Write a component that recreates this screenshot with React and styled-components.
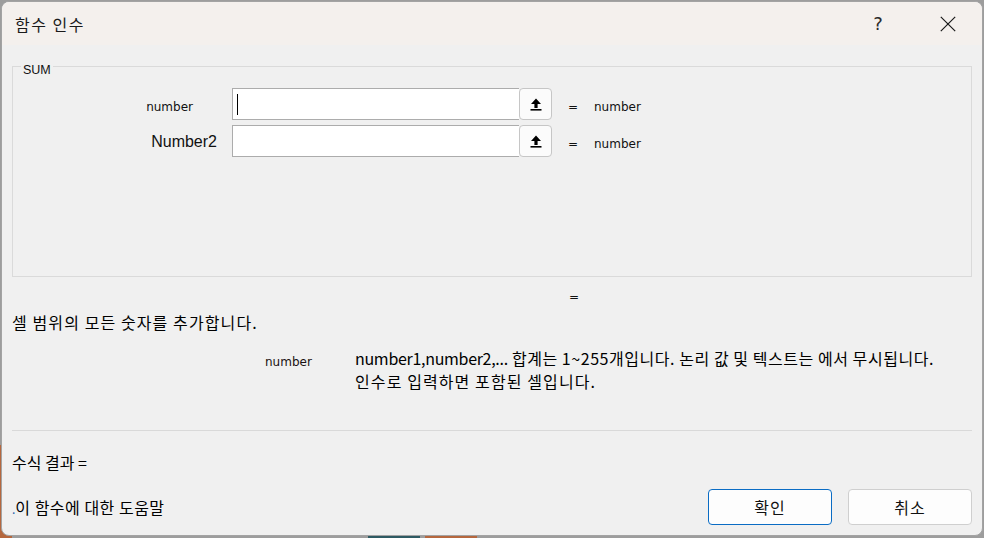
import React from "react";
import styled, { createGlobalStyle } from "styled-components";

const GlobalStyle = createGlobalStyle`
  html, body {
    margin: 0;
    padding: 0;
  }
  body {
    width: 984px;
    height: 538px;
    overflow: hidden;
    font-family: "Noto Sans CJK KR", "Noto Sans", sans-serif;
    color: #000;
  }
  * { box-sizing: border-box; }
`;

const Backdrop = styled.div`
  width: 984px;
  height: 538px;
  padding: 1px 1px 2px 1px;
  background:
    linear-gradient(#b5673e, #b5673e) 0 445px / 12px 93px no-repeat,
    linear-gradient(#2e5a63, #2e5a63) 368px 535px / 52px 3px no-repeat,
    linear-gradient(#b5673e, #b5673e) 425px 535px / 52px 3px no-repeat,
    #9d9d9d;
`;

const Dialog = styled.div`
  width: 982px;
  height: 535px;
  display: flex;
  flex-direction: column;
  border: 1px solid #a3a3a3;
  border-radius: 8px;
  overflow: hidden;
  background: #f0f0f0;
`;

const TitleBar = styled.div`
  height: 43px;
  flex: none;
  display: flex;
  align-items: center;
  background: #f4f0ed;
  padding: 0 11px 0 13px;
`;

const Title = styled.div`
  flex: 1;
  font-size: 16px;
  line-height: 20px;
  letter-spacing: 1.5px;
  color: #1a1a1a;
`;

const TitleButton = styled.div`
  width: 46px;
  height: 32px;
  display: flex;
  align-items: center;
  justify-content: center;
  margin-left: ${(p) => p.$gap || 0}px;
  font-family: "DejaVu Sans", sans-serif;
  font-size: 18px;
  color: #2b2b2b;
`;

const Body = styled.div`
  flex: 1;
  display: flex;
  flex-direction: column;
  padding: 0 10px;
`;

const GroupBox = styled.div`
  position: relative;
  margin-top: 21px;
  height: 211px;
  border: 1px solid #dadada;
  padding-top: 21px;
  display: flex;
  flex-direction: column;
  gap: 5px;
`;

const Legend = styled.div`
  position: absolute;
  top: -4px;
  left: 8px;
  padding: 0 2px;
  background: #f0f0f0;
  font-family: "Liberation Sans", sans-serif;
  font-size: 12.5px;
  line-height: 14px;
  color: #111;
`;

const ArgRow = styled.div`
  display: flex;
  align-items: center;
  height: 32px;
`;

const ArgLabel = styled.div`
  width: 219px;
  text-align: right;
  padding-right: ${(p) => p.$inset}px;
  padding-top: ${(p) => (p.$large ? 1 : 5)}px;
  font-family: ${(p) => (p.$large ? `"Liberation Sans"` : `"DejaVu Sans"`)}, sans-serif;
  font-size: ${(p) => (p.$large ? 16 : 12)}px;
  color: #111;
`;

const RefInput = styled.div`
  width: 320px;
  height: 32px;
  display: flex;
`;

const Field = styled.div`
  flex: 1;
  position: relative;
  display: flex;
  align-items: center;
  padding-left: 4px;
  background: #fff;
  border: 1px solid #acacac;
  border-right: none;
`;

const Caret = styled.span`
  width: 1px;
  height: 21px;
  background: #000;
`;

const RefButton = styled.div`
  width: 33px;
  height: 32px;
  display: flex;
  align-items: center;
  justify-content: center;
  background: #fbfbfb;
  border: 1px solid #c6c6c6;
  border-radius: 4px;
`;

const EqSign = styled.div`
  width: 26px;
  margin-left: ${(p) => p.$offset || 0}px;
  padding-top: ${(p) => p.$drop || 0}px;
  font-family: "DejaVu Sans", sans-serif;
  font-size: 12px;
  color: #111;
`;

const ArgValue = styled.div`
  padding-top: 5px;
  font-family: "DejaVu Sans", sans-serif;
  font-size: 12px;
  color: #111;
`;

const EqLine = styled.div`
  margin-top: 10px;
  height: 20px;
  line-height: 20px;
  display: flex;
`;

const Summary = styled.div`
  margin-top: 4px;
  font-size: 16px;
  line-height: 22px;
  letter-spacing: 1.1px;
`;

const DescBlock = styled.div`
  margin-top: 14px;
  display: flex;
  padding-left: 253px;
`;

const ArgName = styled.div`
  width: 90px;
  flex: none;
  padding-top: 4px;
  font-family: "DejaVu Sans", sans-serif;
  font-size: 12px;
  line-height: 23px;
  color: #1a1111;
`;

const DescText = styled.div`
  display: flex;
  flex-direction: column;
`;

const DescLine = styled.div`
  font-size: 16px;
  line-height: 23px;
  white-space: nowrap;
  letter-spacing: ${(p) => p.$spacing}px;
`;

/* argument list inside the description sits a little tighter */
const Latin = styled.span`
  letter-spacing: -0.3px;
`;

const Separator = styled.div`
  margin-top: 37px;
  height: 1px;
  background: #d9d9d9;
`;

const FormulaResult = styled.div`
  margin-top: 20px;
  font-size: 16px;
  line-height: 22px;
`;

const Footer = styled.div`
  margin-top: 16px;
  display: flex;
  align-items: center;
  gap: 16px;
`;

const HelpLink = styled.div`
  flex: 1;
  font-size: 16px;
  line-height: 22px;
  padding-top: 2px;
  letter-spacing: 0.5px;
`;

const LinkDot = styled.span`
  color: #1f5fa8;
  font-size: 12px;
  letter-spacing: 0;
`;

const DialogButton = styled.div`
  width: 124px;
  height: 36px;
  display: flex;
  align-items: center;
  justify-content: center;
  font-size: 16px;
  letter-spacing: 1px;
  background: #fdfdfd;
  border: 1px solid ${(p) => (p.$primary ? "#0a6cc4" : "#cfcfcf")};
  border-radius: 4px;
  color: #111;
`;

const RefArrow = () => (
  <svg width="12" height="13" viewBox="0 0 12 13">
    <path d="M6 0.5 L11 6 L7.6 6 L7.6 10 L4.4 10 L4.4 6 L1 6 Z" fill="#000" />
    <rect x="0.5" y="11" width="11" height="1.6" fill="#000" />
  </svg>
);

const CloseIcon = () => (
  <svg width="16" height="16" viewBox="0 0 16 16">
    <path d="M0.8 0.8 L15.2 15.2 M15.2 0.8 L0.8 15.2" stroke="#1a1a1a" strokeWidth="1.2" fill="none" />
  </svg>
);

const args = [
  { label: "number", inset: 39, large: false, focused: true },
  { label: "Number2", inset: 15, large: true, focused: false },
];

export default function App() {
  return (
    <>
      <GlobalStyle />
      <Backdrop>
        <Dialog>
          <TitleBar>
            <Title>함수 인수</Title>
            <TitleButton>?</TitleButton>
            <TitleButton $gap={24}>
              <CloseIcon />
            </TitleButton>
          </TitleBar>
          <Body>
            <GroupBox>
              <Legend>SUM</Legend>
              {args.map((a) => (
                <ArgRow key={a.label}>
                  <ArgLabel $inset={a.inset} $large={a.large}>
                    {a.label}
                  </ArgLabel>
                  <RefInput>
                    <Field>{a.focused && <Caret />}</Field>
                    <RefButton>
                      <RefArrow />
                    </RefButton>
                  </RefInput>
                  <EqSign $offset={16} $drop={5}>=</EqSign>
                  <ArgValue>number</ArgValue>
                </ArgRow>
              ))}
            </GroupBox>
            <EqLine>
              <EqSign $offset={557}>=</EqSign>
            </EqLine>
            <Summary>셀 범위의 모든 숫자를 추가합니다.</Summary>
            <DescBlock>
              <ArgName>number</ArgName>
              <DescText>
                <DescLine $spacing={0.55}>
                  <Latin>number1,number2,...</Latin> 합계는 1~255개입니다. 논리 값 및 텍스트는 에서 무시됩니다.
                </DescLine>
                <DescLine $spacing={1.1}>인수로 입력하면 포함된 셀입니다.</DescLine>
              </DescText>
            </DescBlock>
            <Separator />
            <FormulaResult>수식 결과 =</FormulaResult>
            <Footer>
              <HelpLink>
                <LinkDot>.</LinkDot>이 함수에 대한 도움말
              </HelpLink>
              <DialogButton $primary>확인</DialogButton>
              <DialogButton>취소</DialogButton>
            </Footer>
          </Body>
        </Dialog>
      </Backdrop>
    </>
  );
}
